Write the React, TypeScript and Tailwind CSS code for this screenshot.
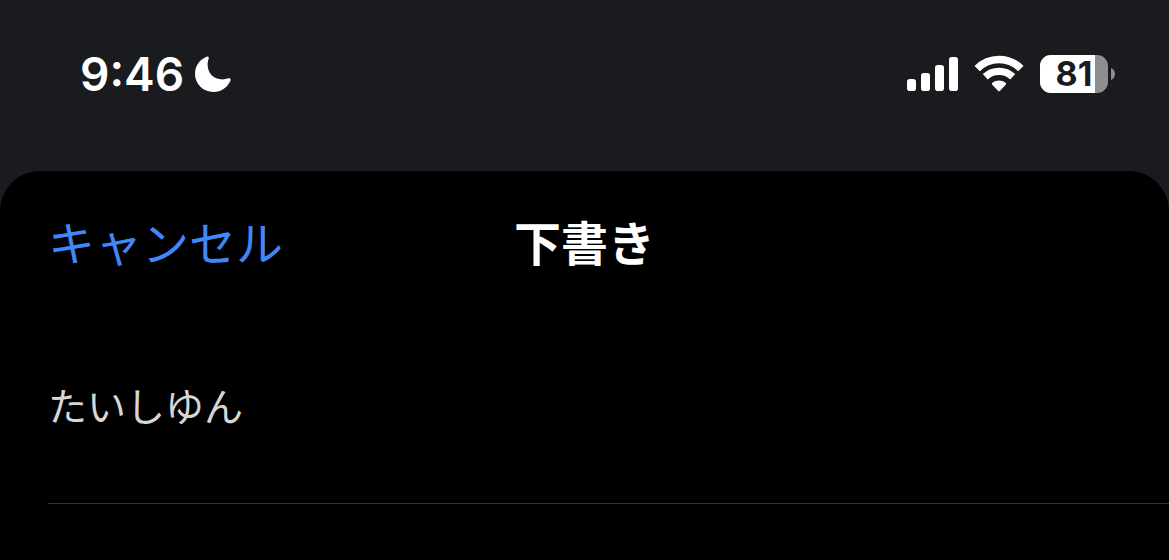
function MoonIcon() {
  return (
    <svg width="38" height="38" viewBox="0 0 38 38" fill="#fff" aria-hidden="true">
      <path d="M12.6 1.8C13.8 1.1 15.2 2 14.7 3.4C13.9 5.4 13.6 7.4 13.6 9.6C13.6 18.2 19.6 24.4 28.4 24.4C30.6 24.4 32.5 24 34.4 23.3C36.1 22.7 37.2 23.9 36.5 25.5C33.6 32.4 27.2 37 19.5 37C9.2 37 1 29 1 18.8C1 11 5.6 4.6 12.6 1.8Z" />
    </svg>
  );
}

function SignalIcon() {
  return (
    <svg width="52" height="36" viewBox="0 0 52 36" fill="#fff" aria-hidden="true">
      <rect x="1" y="23" width="9" height="12" rx="2.8" />
      <rect x="15" y="17" width="9" height="18" rx="2.8" />
      <rect x="29" y="9" width="9" height="26" rx="2.8" />
      <rect x="43" y="1" width="9" height="34" rx="2.8" />
    </svg>
  );
}

function WifiIcon() {
  return (
    <svg width="50" height="38" viewBox="0 0 50 38" aria-hidden="true">
      <path d="M3.2 13.6A30.5 30.5 0 0 1 46.8 13.6" fill="none" stroke="#fff" strokeWidth="7.6" />
      <path d="M11.3 21.8A20 20 0 0 1 38.7 21.8" fill="none" stroke="#fff" strokeWidth="7.4" />
      <path d="M18.3 29.8C17.6 29.1 17.7 28.3 18.5 27.7C22.2 24.9 27.8 24.9 31.5 27.7C32.3 28.3 32.4 29.1 31.7 29.8L26 35.7C25.3 36.4 24.7 36.4 24 35.7Z" fill="#fff" />
    </svg>
  );
}

function Battery({ level }: { level: number }) {
  return (
    <div className="flex items-center gap-[3px]">
      <div className="relative flex h-[38px] w-[68px] items-center justify-center rounded-[11px] bg-[#8e8e90]">
        <div className="absolute inset-y-0 left-0 rounded-l-[11px] bg-white" style={{ width: `${level}%` }} />
        <span className="relative text-[34px] leading-none font-bold text-[#1a1b1e]">{level}</span>
      </div>
      <svg width="4" height="12" viewBox="0 0 4 12" fill="#8e8e90" aria-hidden="true">
        <path d="M0 0C2.4 1 4 3.3 4 6S2.4 11 0 12Z" />
      </svg>
    </div>
  );
}

function StatusBar() {
  return (
    <div className="flex h-[171px] items-start justify-between pt-[50px] pr-[54px] pl-20 font-['Inter',sans-serif] text-white">
      <div className="flex h-12 items-center gap-[10px]">
        <span className="text-[46px] leading-none font-semibold">9:46</span>
        <MoonIcon />
      </div>
      <div className="flex h-12 items-center gap-4">
        <SignalIcon />
        <WifiIcon />
        <Battery level={81} />
      </div>
    </div>
  );
}

const drafts = ["たいしゆん"];

export default function App() {
  return (
    <div className="flex min-h-screen flex-col bg-[#1a1b1e] font-['Noto_Sans_CJK_JP',sans-serif]">
      <StatusBar />
      <main className="flex-1 rounded-t-[40px] bg-black">
        <header className="grid h-[138px] grid-cols-[1fr_auto_1fr] items-center px-12">
          <button type="button" className="justify-self-start text-[47px] leading-none font-normal text-[#4087f7]">
            キャンセル
          </button>
          <h1 className="text-[47px] leading-none font-bold text-white">下書き</h1>
        </header>
        <ul className="pl-12">
          {drafts.map((draft) => (
            <li key={draft} className="flex h-[195px] items-center border-b border-[#333335] pb-1 text-[39px] font-normal text-[#d6d6d6]">
              {draft}
            </li>
          ))}
        </ul>
      </main>
    </div>
  );
}
